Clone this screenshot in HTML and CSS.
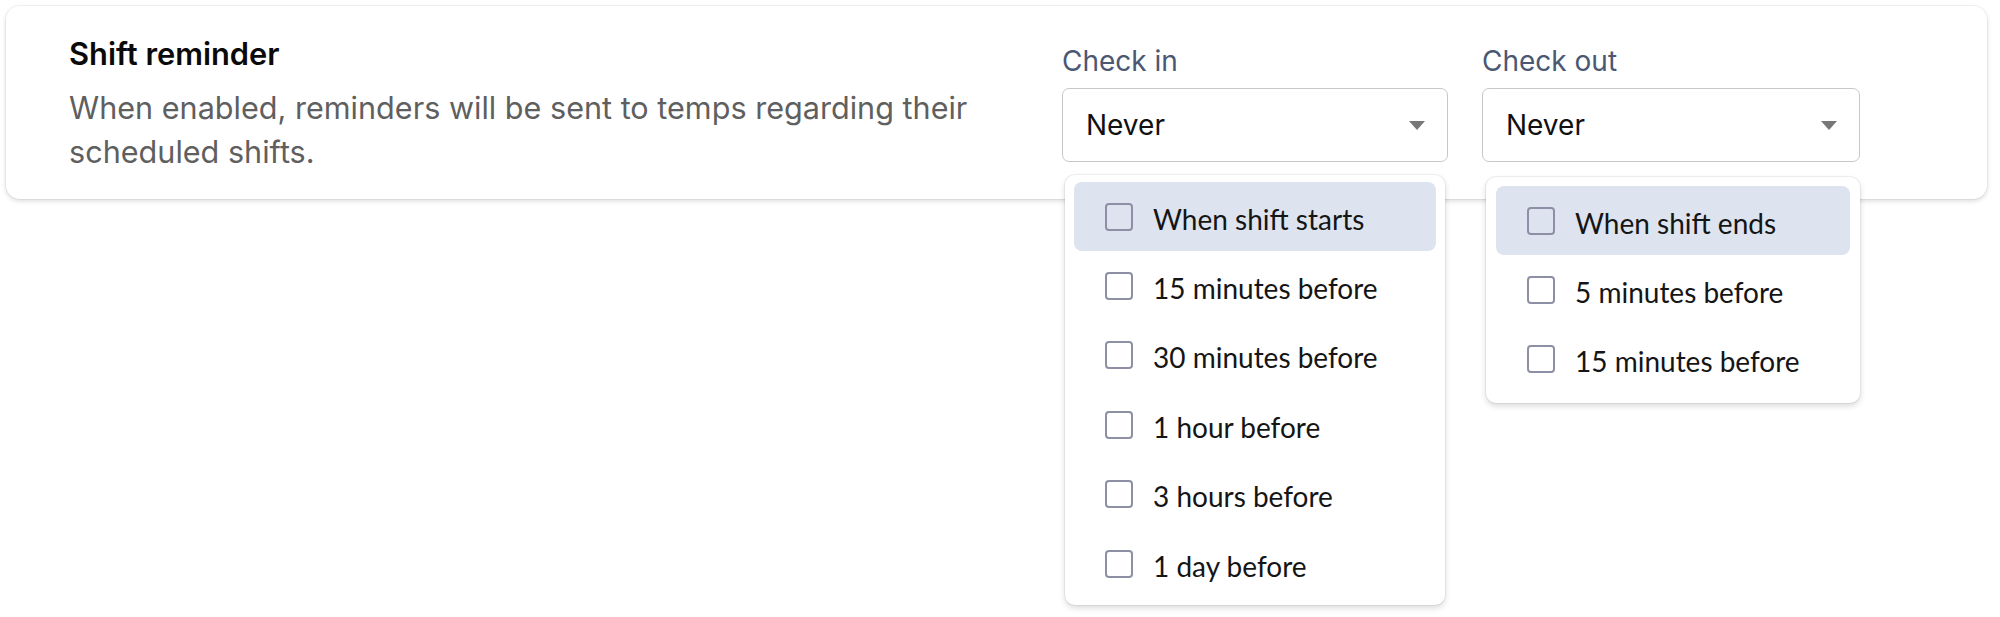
FILE: index.html
```html
<!DOCTYPE html>
<html lang="en">
<head>
<meta charset="utf-8">
<title>Shift reminder</title>
<link rel="stylesheet" href="styles.css">
</head>
<body>
<section class="card">
  <div class="info">
    <h3 class="title">Shift reminder</h3>
    <p class="desc">When enabled, reminders will be sent to temps regarding their scheduled shifts.</p>
  </div>
  <div class="fields">
    <div class="field field-in">
      <label class="label">Check in</label>
      <div class="select">
        <span class="value">Never</span>
        <span class="caret"></span>
      </div>
      <ul class="menu menu-in">
        <li class="opt active"><span class="box"></span><span class="opt-text">When shift starts</span></li>
        <li class="opt"><span class="box"></span><span class="opt-text">15 minutes before</span></li>
        <li class="opt"><span class="box"></span><span class="opt-text">30 minutes before</span></li>
        <li class="opt"><span class="box"></span><span class="opt-text">1 hour before</span></li>
        <li class="opt"><span class="box"></span><span class="opt-text">3 hours before</span></li>
        <li class="opt"><span class="box"></span><span class="opt-text">1 day before</span></li>
      </ul>
    </div>
    <div class="field field-out">
      <label class="label">Check out</label>
      <div class="select">
        <span class="value">Never</span>
        <span class="caret"></span>
      </div>
      <ul class="menu menu-out">
        <li class="opt active"><span class="box"></span><span class="opt-text">When shift ends</span></li>
        <li class="opt"><span class="box"></span><span class="opt-text">5 minutes before</span></li>
        <li class="opt"><span class="box"></span><span class="opt-text">15 minutes before</span></li>
      </ul>
    </div>
  </div>
</section>
</body>
</html>
```
FILE: styles.css
```css
* { box-sizing: border-box; }
html, body { margin: 0; padding: 0; background: #ffffff; }
body {
  width: 2000px;
  height: 617px;
  overflow: hidden;
  font-family: Inter, "Noto Sans", sans-serif;
  padding: 6px 13px 0 6px;
}
.card {
  display: flex;
  align-items: flex-start;
  background: #fff;
  border-radius: 14px;
  box-shadow: 0 0 0 1px rgba(0,0,0,0.04), 0 2px 5px rgba(0,0,0,0.15);
  padding: 28px 127px 25px 63px;
  width: 1981px;
}
.info { flex: 1; min-width: 0; padding-right: 30px; }
.title {
  margin: 0;
  font-size: 30.8px;
  font-weight: 600;
  line-height: 40px;
  color: #0a0a0a;
}
.desc {
  margin: 12px 0 0;
  font-size: 30.6px;
  line-height: 44px;
  color: #5f5f5f;
  max-width: 960px;
}
.fields {
  display: flex;
  gap: 34px;
  padding-top: 6px;
}
.field { position: relative; display: flex; flex-direction: column; }
.field-in { width: 386px; }
.field-out { width: 378px; }
.label {
  font-size: 28px;
  line-height: 42px;
  color: #4a5874;
  margin-bottom: 6px;
}
.select {
  height: 74px;
  border: 1.5px solid #c8c8c8;
  border-radius: 7px;
  display: flex;
  align-items: center;
  justify-content: space-between;
  padding: 0 22px 0 23px;
  background: #fff;
}
.value { font-size: 28px; color: #111; }
.caret {
  width: 0; height: 0;
  border-left: 8px solid transparent;
  border-right: 8px solid transparent;
  border-top: 9px solid #777;
}
.menu {
  position: absolute;
  list-style: none;
  margin: 0;
  background: #fff;
  border-radius: 10px;
  box-shadow: 0 0 0 1px rgba(0,0,0,0.05), 0 3px 6px rgba(0,0,0,0.15);
  font-family: Lato, "Noto Sans", sans-serif;
}
.menu-in { left: 3px; top: 135px; width: 380px; padding: 7px 9px; }
.menu-out { left: 4px; top: 137px; width: 374px; padding: 9px 10px; }
.opt {
  height: 69.4px;
  display: flex;
  align-items: center;
  padding-left: 31px;
  border-radius: 8px;
  font-size: 28px;
  color: #151515;
}
.opt.active { background: #dde4f0; }
.box {
  width: 28px; height: 28px;
  border: 2px solid #8d90a4;
  border-radius: 4px;
  margin-right: 20px;
  flex: none;
}
.opt-text { position: relative; top: 2px; }
```
